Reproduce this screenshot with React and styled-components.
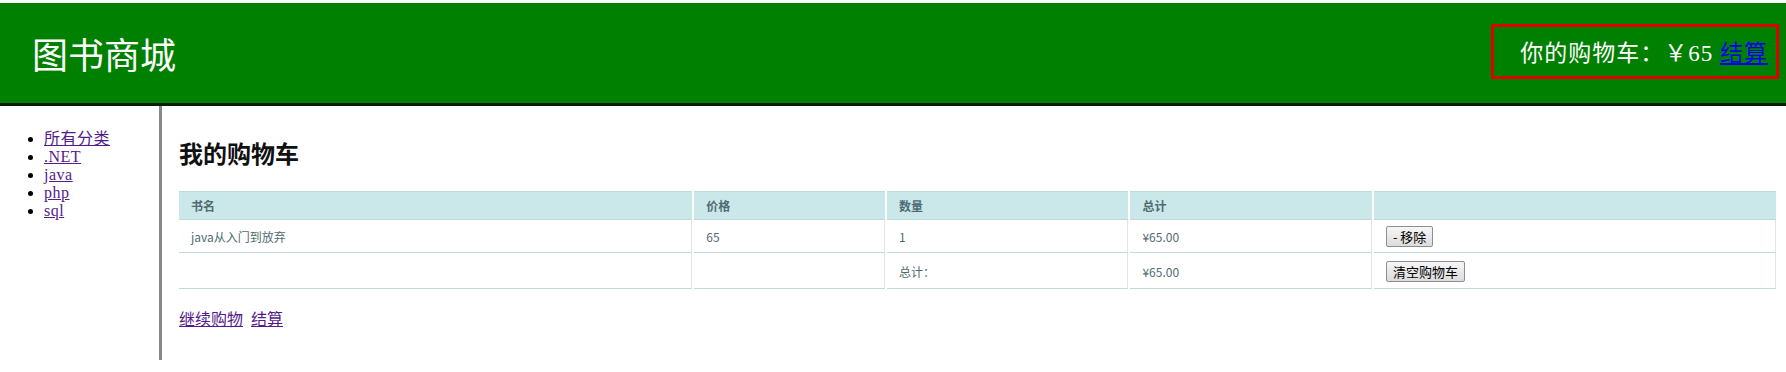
import React from 'react'
import styled, { createGlobalStyle } from 'styled-components'

const cjk = '"Liberation Serif", "Noto Sans CJK SC", serif';
const sans = '"Noto Sans CJK SC", "Liberation Sans", sans-serif';

const GlobalStyle = createGlobalStyle`
  body {
    margin: 0;
    padding-top: 3px;
    background: #fff;
    font-family: ${cjk};
  }
  a { color: #551a8b; }
`;

const items = [
  { name: 'java从入门到放弃', price: '65', count: '1', total: '¥65.00' },
];

const App = () => {
  return (
    <>
      <GlobalStyle />
      <Header>
        <Title>图书商城</Title>
        <CartBox>
          你的购物车：￥65&nbsp;<CartLink href="#">结算</CartLink>
        </CartBox>
      </Header>
      <Body>
        <Sidebar>
          <CategoryList>
            <li><a href="#">所有分类</a></li>
            <li><a href="#">.NET</a></li>
            <li><a href="#">java</a></li>
            <li><a href="#">php</a></li>
            <li><a href="#">sql</a></li>
          </CategoryList>
        </Sidebar>
        <Main>
          <Heading>我的购物车</Heading>
          <CartTable>
            <thead>
              <tr>
                <Th $w="32.3%">书名</Th>
                <Th $w="12%">价格</Th>
                <Th $w="15.2%">数量</Th>
                <Th $w="15.2%">总计</Th>
                <Th $w="25.3%"></Th>
              </tr>
            </thead>
            <tbody>
              {items.map(item => (
                <tr key={item.name}>
                  <Td>{item.name}</Td>
                  <Td>{item.price}</Td>
                  <Td>{item.count}</Td>
                  <Td>{item.total}</Td>
                  <Td><Button>- 移除</Button></Td>
                </tr>
              ))}
              <tr>
                <Td></Td>
                <Td></Td>
                <Td>总计：</Td>
                <Td>¥65.00</Td>
                <Td $tall><Button>清空购物车</Button></Td>
              </tr>
            </tbody>
          </CartTable>
          <Links>
            <a href="#">继续购物</a>&nbsp;&nbsp;<a href="#">结算</a>
          </Links>
        </Main>
      </Body>
    </>
  )
}

const Header = styled.header`
    display: flex;
    align-items: center;
    justify-content: space-between;
    height: 100px;
    background: #008000;
    border-bottom: 3px solid #0b1a0b;
    padding: 0 7px 0 32px;
`;

const Title = styled.h1`
    margin: 0;
    font-family: ${cjk};
    font-size: 36px;
    font-weight: normal;
    color: #fff;
`;

const CartBox = styled.div`
    display: flex;
    align-items: center;
    height: 49px;
    padding: 0 8px 0 26px;
    border: 3px solid #e00000;
    font-size: 23px;
    letter-spacing: 1px;
    color: #fff;
    margin-top: -4px;
`;

const CartLink = styled.a`
    color: #0000ee;
`;

const Body = styled.div`
    display: flex;
`;

const Sidebar = styled.nav`
    width: 159px;
    min-height: 254px;
    border-right: 3px solid #888;
    flex-shrink: 0;
`;

const CategoryList = styled.ul`
    margin: 24px 0 0;
    padding-left: 44px;
    font-size: 16px;
    line-height: 18px;
    letter-spacing: 0.5px;
`;

const Main = styled.main`
    flex: 1;
    padding: 14px 10px 0 17px;
`;

const Heading = styled.h2`
    margin: 21px 0 21px;
    font-size: 24px;
    line-height: 29px;
    font-weight: bold;
    color: #111;
`;

const CartTable = styled.table`
    border-collapse: separate;
    border-spacing: 2px 0;
    margin-left: -2px;
    width: calc(100% + 4px);
`;

const Th = styled.th`
    width: ${p => p.$w};
    height: 16px;
    padding: 5px 6px 5px 12px;
    background: #cae8ea;
    border-top: 1px solid #c1dad7;
    border-bottom: 1px solid #c1dad7;
    text-align: left;
    font: bold 12px ${sans};
    color: #4f6b72;
`;

const Td = styled.td`
    height: ${p => (p.$tall ? '24px' : '21px')};
    padding: 6px 6px 5px 12px;
    border-bottom: 1px solid #c1dad7;
    border-right: 1px solid #dde9e7;
    font: 12px ${sans};
    color: #4f6b72;
    vertical-align: middle;
`;

const Button = styled.button`
    height: 21px;
    padding: 0 6px;
    font: 13px ${sans};
    color: #000;
    border: 1px solid #8e8e8e;
    border-radius: 2px;
    background: linear-gradient(#f6f6f6, #dcdcdc);
    line-height: 17px;
`;

const Links = styled.p`
    margin: 22px 0 0;
    font-size: 16px;
    line-height: 18px;
`;

export default App
